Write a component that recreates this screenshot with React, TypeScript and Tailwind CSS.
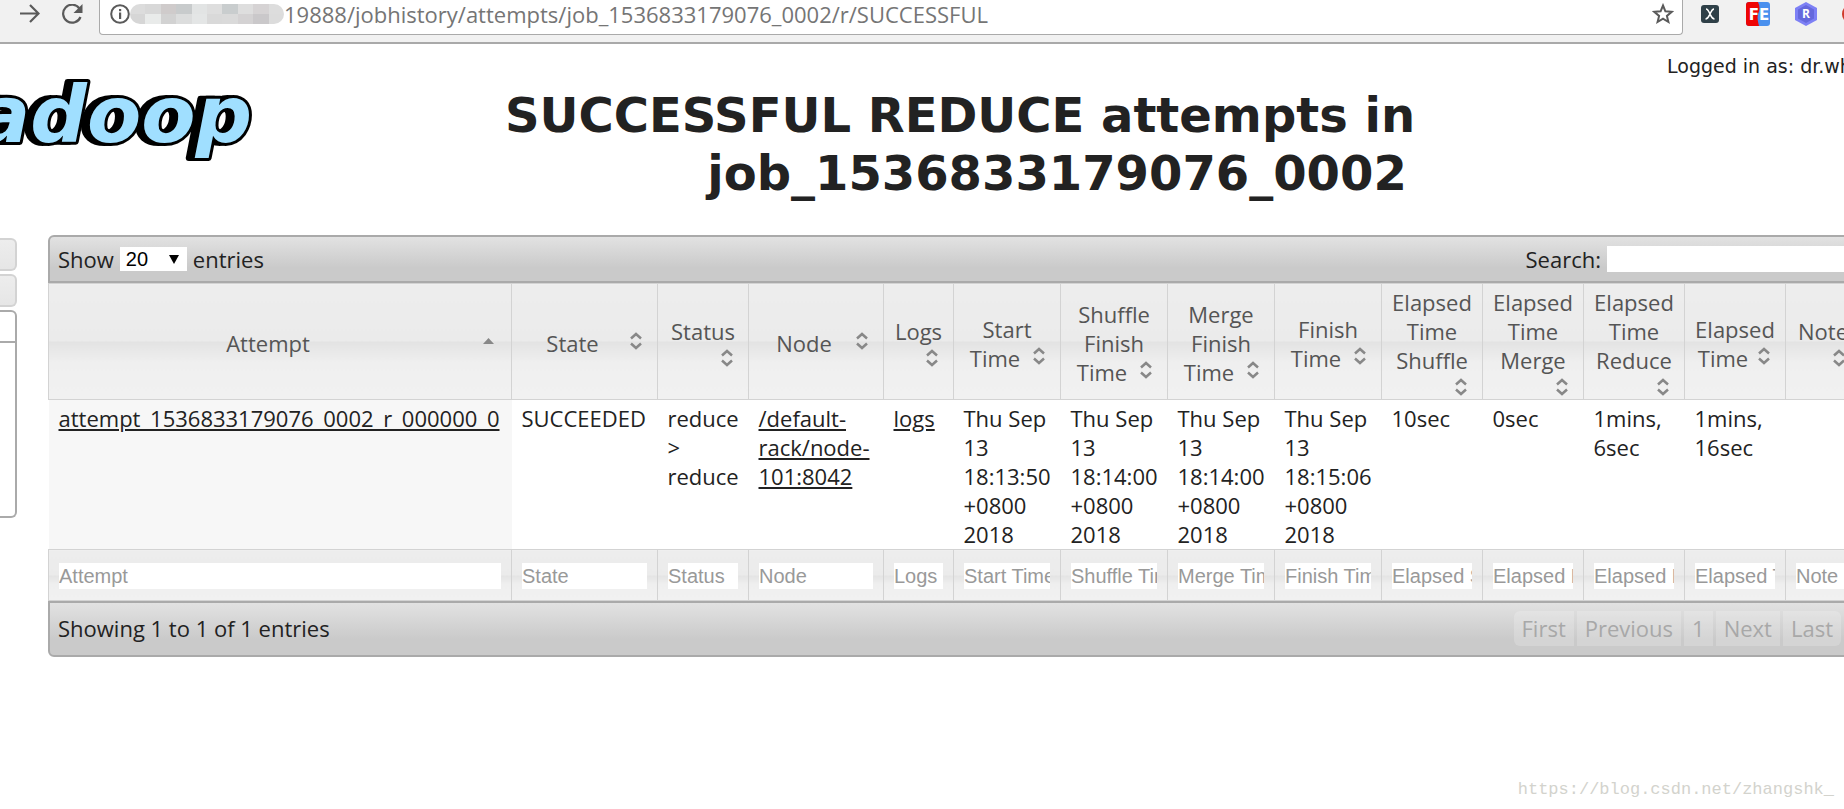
import { useState } from "react";

type SortState = "asc" | "none";

type Column = {
  title: string;
  filter: string;
  width: string;
};

const COLUMNS: Column[] = [
  { title: "Attempt", filter: "Attempt", width: "" },
  { title: "State", filter: "State", width: "w-[146px]" },
  { title: "Status", filter: "Status", width: "w-[91px]" },
  { title: "Node", filter: "Node", width: "w-[135px]" },
  { title: "Logs", filter: "Logs", width: "w-[70px]" },
  { title: "Start Time", filter: "Start Time", width: "w-[107px]" },
  { title: "Shuffle Finish Time", filter: "Shuffle Time", width: "w-[107px]" },
  { title: "Merge Finish Time", filter: "Merge Time", width: "w-[107px]" },
  { title: "Finish Time", filter: "Finish Time", width: "w-[107px]" },
  { title: "Elapsed Time Shuffle", filter: "Elapsed Shuffle Time", width: "w-[101px]" },
  { title: "Elapsed Time Merge", filter: "Elapsed Merge Time", width: "w-[101px]" },
  { title: "Elapsed Time Reduce", filter: "Elapsed Reduce Time", width: "w-[101px]" },
  { title: "Elapsed Time", filter: "Elapsed Time", width: "w-[101px]" },
  { title: "Note", filter: "Note", width: "w-[75px]" },
];

const TIMES = ["18:13:50", "18:14:00", "18:14:00", "18:15:06"];
const ELAPSED = ["10sec", "0sec", "1mins, 6sec", "1mins, 16sec"];

const PAGES = ["First", "Previous", "1", "Next", "Last"];

const MOSAIC = [
  ["#dcdcdc", "#d8d8d8", "#cfcbcb", "#c8cbcc", "#e2e4e4", "#dedede", "#c9cdce", "#dedede", "#d6d3d4", "#dddddd"],
  ["#d6d6d6", "#e9ebea", "#d2d2d2", "#dcdddd", "#e4e6e6", "#d9d9d9", "#dadada", "#d4d2d3", "#cac8ca", "#dcdcdc"],
];

const BAR =
  "flex items-center justify-between border-2 border-[#aaaaaa] bg-linear-to-b from-[#e2e2e2] to-[#cacaca] to-70%";
const CELL_HEAD =
  "border border-[#d3d3d3] bg-[linear-gradient(#ededed_0%,#ebebeb_49%,#e3e3e3_50%,#efefef_68%,#f1f1f1_100%)]";
const CELL_BODY = "px-2.5 pt-1";

function SortIcon({ state }: { state: SortState }) {
  return (
    <svg className="float-right size-6" viewBox="0 0 24 24" fill="none" aria-hidden="true">
      {state === "asc" ? (
        <path d="M5 15 L10.500 9 L16 15 Z" fill="#888888" />
      ) : (
        <path d="M7 9.500 L12 5 L17 9.500 M7 14.500 L12 19 L17 14.500" stroke="#888888" strokeWidth="2.500" />
      )}
    </svg>
  );
}

function BrowserBar() {
  return (
    <div className="flex h-11 items-start border-b-2 border-[#a9a9a9] bg-[#f1f1f1]">
      <button type="button" aria-label="Forward" className="mt-1 ml-5">
        <svg className="size-5" viewBox="0 0 20 20" fill="none" stroke="#5a5a5a" strokeWidth="2.200">
          <path d="M0 9.500 H18.500 M10 1 L18.500 9.500 L10 18" />
        </svg>
      </button>
      <button type="button" aria-label="Reload" className="mt-1 ml-5">
        <svg className="size-6" viewBox="0 0 24 24" fill="none">
          <path d="M19.500 4.500 A9 9 0 1 0 20.500 13" stroke="#5a5a5a" strokeWidth="2.200" />
          <path d="M22.500 0 V9 H13.500 Z" fill="#5a5a5a" />
        </svg>
      </button>
      <div className="ml-[15px] flex h-[35px] min-w-0 flex-1 items-start rounded-b border border-t-0 border-[#aaaaaa] bg-white pr-2 pl-2.5">
        <svg className="mt-1 size-5 shrink-0" viewBox="0 0 20 20" aria-hidden="true">
          <circle cx="10" cy="10" r="8.800" fill="none" stroke="#5a5a5a" strokeWidth="2" />
          <rect x="9" y="8.500" width="2.200" height="6.500" fill="#5a5a5a" />
          <rect x="9" y="5" width="2.200" height="2.200" fill="#5a5a5a" />
        </svg>
        <div className="mt-1 h-5 w-[154px] shrink-0 overflow-hidden rounded-full" aria-hidden="true">
          {MOSAIC.map((row, i) => (
            <div key={i} className="flex h-2.5">
              {row.map((color, j) => (
                <span key={j} className="flex-1" style={{ backgroundColor: color }} />
              ))}
            </div>
          ))}
        </div>
        <input
          type="text"
          aria-label="Address"
          defaultValue="19888/jobhistory/attempts/job_1536833179076_0002/r/SUCCESSFUL"
          className="h-7 min-w-0 flex-1 font-['Open_Sans',sans-serif] text-[22px] text-[#757575] outline-none"
        />
        <button type="button" aria-label="Bookmark this page" className="mt-[3px]">
          <svg className="size-[22px]" viewBox="0 0 22 22" fill="none" stroke="#5a5a5a" strokeWidth="2">
            <path d="M11 2.500 L13.400 8.300 L19.700 8.800 L14.900 12.900 L16.400 19 L11 15.700 L5.600 19 L7.100 12.900 L2.300 8.800 L8.600 8.300 Z" />
          </svg>
        </button>
      </div>
      <div className="ml-[17px] flex h-7 w-36 shrink-0 items-center">
        <svg className="size-5 shrink-0" viewBox="0 0 20 20" aria-hidden="true">
          <rect x="1" y="1" width="18" height="18" rx="3" fill="#2f4048" />
          <path d="M6 5 C8 5 9 8 10 10 S12 15 14.500 15 M14 5 C12 5 11 8 10 10 S8 15 5.500 15" fill="none" stroke="#ffffff" strokeWidth="1.500" />
        </svg>
        <svg className="ml-[26px] size-6 shrink-0" viewBox="0 0 24 24" aria-hidden="true">
          <rect width="24" height="24" rx="3" fill="#4a90ee" />
          <path d="M3 0 H12 C14 4 14 8 12 12 C11 16 12 20 13 24 H3 A3 3 0 0 1 0 21 V3 A3 3 0 0 1 3 0 Z" fill="#ee0505" />
          <text x="13" y="18" textAnchor="middle" fontFamily="DejaVu Sans" fontWeight="bold" fontSize="15" fill="#ffffff">
            FE
          </text>
        </svg>
        <svg className="ml-6 size-6 shrink-0" viewBox="0 0 24 24" aria-hidden="true">
          <path d="M12 0 L23 6 V18 L12 24 L1 18 V6 Z" fill="#7d80f5" />
          <path d="M12 3 L20 7.500 V16.500 L12 21 L4 16.500 V7.500 Z" fill="#6568dd" />
          <text x="12" y="16" textAnchor="middle" fontFamily="Open Sans" fontWeight="bold" fontSize="12" fill="#ffffff">
            R
          </text>
        </svg>
        <span className="ml-6 size-5 shrink-0 rounded-full bg-[#d03a2b]" />
      </div>
    </div>
  );
}

function HadoopLogo() {
  return (
    <svg
      className="float-left h-36 w-[253px] drop-shadow-[-6px_0_0_#000000]"
      viewBox="0 0 253 144"
      role="img"
      aria-label="hadoop"
    >
      <text
        x="252"
        y="98"
        textAnchor="end"
        fontFamily="DejaVu Sans"
        fontWeight="bold"
        fontStyle="italic"
        fontSize="79"
        fill="#a0dfff"
        stroke="#000000"
        strokeWidth="6"
        strokeLinejoin="round"
        paintOrder="stroke"
      >
        adoop
      </text>
    </svg>
  );
}

function SideMenu() {
  return (
    <nav aria-label="Menu" className="mt-[3px] w-[17px] shrink-0">
      <div className="h-[33px] rounded-r-md border-2 border-l-0 border-[#d3d3d3] bg-linear-to-b from-[#ededed] to-[#e6e6e6]" />
      <div className="mt-[3px] h-[33px] rounded-r-md border-2 border-l-0 border-[#d3d3d3] bg-linear-to-b from-[#ededed] to-[#e6e6e6]" />
      <div className="mt-[3px] h-[33px] rounded-tr-md border-2 border-l-0 border-[#aaaaaa]" />
      <div className="h-[175px] rounded-br-md border-2 border-t-0 border-l-0 border-[#aaaaaa]" />
    </nav>
  );
}

function AttemptsTable() {
  return (
    <table className="w-full table-fixed border-collapse">
      <colgroup>
        {COLUMNS.map((column) => (
          <col key={column.title} className={column.width} />
        ))}
      </colgroup>
      <thead>
        <tr>
          {COLUMNS.map((column, index) => (
            <th
              key={column.title}
              scope="col"
              className={`${CELL_HEAD} px-[9px] pt-1 text-center align-middle font-normal text-[#555555]`}
            >
              <div className="flow-root">
                {column.title}
                <SortIcon state={index === 0 ? "asc" : "none"} />
              </div>
            </th>
          ))}
        </tr>
      </thead>
      <tbody>
        <tr className="align-top">
          <td className={`${CELL_BODY} bg-[#f7f7f7]`}>
            <a href="#attempt" className="underline">
              attempt_1536833179076_0002_r_000000_0
            </a>
          </td>
          <td className={CELL_BODY}>SUCCEEDED</td>
          <td className={CELL_BODY}>reduce &gt; reduce</td>
          <td className={CELL_BODY}>
            <a href="#node" className="underline">
              /default-rack/node-101:8042
            </a>
          </td>
          <td className={CELL_BODY}>
            <a href="#logs" className="underline">
              logs
            </a>
          </td>
          {TIMES.map((time, index) => (
            <td key={index} className={CELL_BODY}>
              Thu Sep 13 {time} +0800 2018
            </td>
          ))}
          {ELAPSED.map((value) => (
            <td key={value} className={CELL_BODY}>
              {value}
            </td>
          ))}
          <td />
        </tr>
      </tbody>
      <tfoot>
        <tr>
          {COLUMNS.map((column) => (
            <th key={column.title} className={`${CELL_HEAD} h-[51px] px-2.5 pt-0.5 font-normal`}>
              <input
                type="text"
                aria-label={`Filter ${column.title}`}
                placeholder={column.filter}
                className="block h-[26px] w-full bg-white font-['Liberation_Sans',sans-serif] text-[20px] text-[#222222] placeholder:text-[#999999]"
              />
            </th>
          ))}
        </tr>
      </tfoot>
    </table>
  );
}

export default function App() {
  const [length, setLength] = useState("20");
  const [search, setSearch] = useState("");

  return (
    <div className="min-h-screen overflow-hidden bg-white font-['Open_Sans',sans-serif] text-[22px] leading-[29px] text-[#222222]">
      <BrowserBar />

      <div className="-mr-[17px]">
        <header className="flow-root pb-[33px]">
          <HadoopLogo />
          <div className="float-right h-16 w-[194px] pt-2 font-['DejaVu_Sans',sans-serif] text-[19px] whitespace-nowrap">
            Logged in as: dr.who
          </div>
          <h1 className="pt-[42px] text-center font-['DejaVu_Sans',sans-serif] text-[48px] leading-[58px] font-bold">
            SUCCESSFUL REDUCE attempts in job_1536833179076_0002
          </h1>
        </header>

        <div className="flex items-start">
          <SideMenu />

          <main className="ml-[31px] min-w-0 flex-1">
            <div className={`${BAR} h-12 rounded-t-md px-2`}>
              <label className="flex items-center gap-1.5">
                Show
                <span className="relative">
                  <select
                    value={length}
                    onChange={(event) => setLength(event.target.value)}
                    className="block h-6 w-[67px] appearance-none bg-white pl-1.5 font-['Liberation_Sans',sans-serif] text-[20px] leading-6 text-black"
                  >
                    <option value="20">20</option>
                    <option value="40">40</option>
                    <option value="60">60</option>
                    <option value="80">80</option>
                    <option value="100">100</option>
                  </select>
                  <svg className="pointer-events-none absolute top-2 right-2 size-2.5" viewBox="0 0 10 10" aria-hidden="true">
                    <path d="M0 0 H10 L5 9 Z" fill="#000000" />
                  </svg>
                </span>
                entries
              </label>
              <label className="flex items-center gap-1.5">
                Search:
                <input
                  type="text"
                  value={search}
                  onChange={(event) => setSearch(event.target.value)}
                  className="h-[26px] w-[244px] bg-white"
                />
              </label>
            </div>

            <AttemptsTable />

            <div className={`${BAR} h-14 rounded-b-md pr-[18px] pb-0.5 pl-2`}>
              <p>Showing 1 to 1 of 1 entries</p>
              <div className="flex gap-[3px]">
                {PAGES.map((page) => (
                  <button
                    key={page}
                    type="button"
                    disabled
                    className="h-[35px] bg-white/20 px-2 text-[#a8a8a8] first:rounded-l-md last:rounded-r-md"
                  >
                    {page}
                  </button>
                ))}
              </div>
            </div>
          </main>
        </div>
      </div>

      <p className="mt-[119px] pr-2.5 text-right font-['Liberation_Mono',monospace] text-[17px] leading-7 text-[#d3d3cd]">
        https://blog.csdn.net/zhangshk_
      </p>
    </div>
  );
}
